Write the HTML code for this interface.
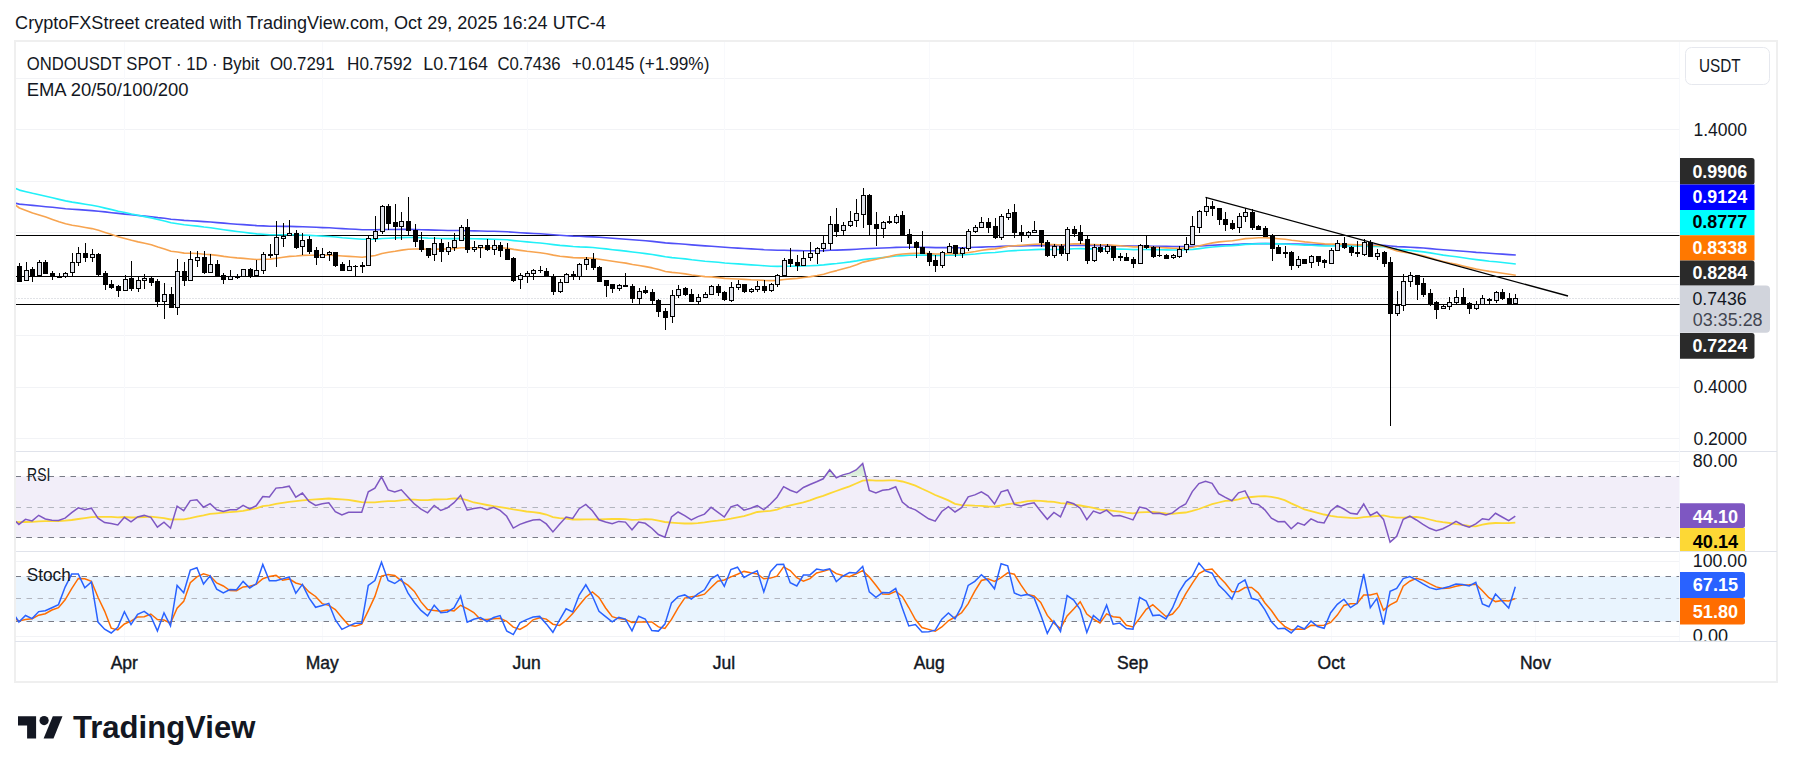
<!DOCTYPE html>
<html><head><meta charset="utf-8"><style>
html,body{margin:0;padding:0;background:#fff;width:1793px;height:773px;overflow:hidden;position:relative;font-family:"Liberation Sans",sans-serif}
text{font-family:"Liberation Sans",sans-serif}
</style></head><body>
<svg style="position:absolute;left:0;top:0" width="1793" height="773" viewBox="0 0 1793 773">
<defs><clipPath id="cp"><rect x="16" y="42" width="1663.5" height="599.5"/></clipPath>
<clipPath id="cp2"><rect x="1680" y="42" width="97" height="598.5"/></clipPath></defs>
<rect x="15" y="41" width="1762" height="641" fill="none" stroke="#efefef" stroke-width="2"/>
<g clip-path="url(#cp)">
<line x1="15.5" x2="1679.5" y1="78.5" y2="78.5" stroke="#f2f3f6" stroke-width="1"/>
<line x1="15.5" x2="1679.5" y1="129.5" y2="129.5" stroke="#f2f3f6" stroke-width="1"/>
<line x1="15.5" x2="1679.5" y1="181.5" y2="181.5" stroke="#f2f3f6" stroke-width="1"/>
<line x1="15.5" x2="1679.5" y1="232.5" y2="232.5" stroke="#f2f3f6" stroke-width="1"/>
<line x1="15.5" x2="1679.5" y1="284.5" y2="284.5" stroke="#f2f3f6" stroke-width="1"/>
<line x1="15.5" x2="1679.5" y1="335.5" y2="335.5" stroke="#f2f3f6" stroke-width="1"/>
<line x1="15.5" x2="1679.5" y1="387.5" y2="387.5" stroke="#f2f3f6" stroke-width="1"/>
<line x1="15.5" x2="1679.5" y1="438.5" y2="438.5" stroke="#f2f3f6" stroke-width="1"/>
<line x1="124.5" x2="124.5" y1="41" y2="641" stroke="#f8f9fc" stroke-width="1"/>
<line x1="322.5" x2="322.5" y1="41" y2="641" stroke="#f8f9fc" stroke-width="1"/>
<line x1="527.5" x2="527.5" y1="41" y2="641" stroke="#f8f9fc" stroke-width="1"/>
<line x1="724.5" x2="724.5" y1="41" y2="641" stroke="#f8f9fc" stroke-width="1"/>
<line x1="929.5" x2="929.5" y1="41" y2="641" stroke="#f8f9fc" stroke-width="1"/>
<line x1="1133.5" x2="1133.5" y1="41" y2="641" stroke="#f8f9fc" stroke-width="1"/>
<line x1="1331.5" x2="1331.5" y1="41" y2="641" stroke="#f8f9fc" stroke-width="1"/>
<line x1="1535.5" x2="1535.5" y1="41" y2="641" stroke="#f8f9fc" stroke-width="1"/>
<line x1="15.5" x2="1679.5" y1="461.5" y2="461.5" stroke="#f2f3f6" stroke-width="1"/>
<line x1="15.5" x2="1679.5" y1="492" y2="492" stroke="#f2f3f6" stroke-width="1"/>
<line x1="15.5" x2="1679.5" y1="522.5" y2="522.5" stroke="#f2f3f6" stroke-width="1"/>
<line x1="15.5" x2="1679.5" y1="561.5" y2="561.5" stroke="#f2f3f6" stroke-width="1"/>
<line x1="15.5" x2="1679.5" y1="598.5" y2="598.5" stroke="#f2f3f6" stroke-width="1"/>
<line x1="15.5" x2="1679.5" y1="636.5" y2="636.5" stroke="#f2f3f6" stroke-width="1"/>
<rect x="15.5" y="476.5" width="1664.0" height="61" fill="#f2eef9"/>
<defs><clipPath id="obc"><rect x="0" y="440" width="1793" height="36.5"/></clipPath><linearGradient id="obg" x1="0" y1="0" x2="0" y2="1"><stop offset="0" stop-color="#d0ead1"/><stop offset="1" stop-color="#f3f9f3"/></linearGradient></defs>
<polygon clip-path="url(#obc)" points="796.8,492.6 803.4,487.5 810.0,484.5 816.6,481.8 823.2,478.8 829.7,469.7 836.3,477.8 842.9,474.9 849.5,473.1 856.1,470.0 862.7,463.5 869.3,490.5 875.9,492.9 882.5,490.3 882.5,476.5 796.8,476.5" fill="url(#obg)"/>
<rect x="15.5" y="576.5" width="1664.0" height="45" fill="#e9f4fe"/>
<line x1="15.5" x2="1679.5" y1="476.5" y2="476.5" stroke="#787b86" stroke-width="1" stroke-dasharray="5.5,5.5"/>
<line x1="15.5" x2="1679.5" y1="507.5" y2="507.5" stroke="#b2b5be" stroke-width="1" stroke-dasharray="5.5,5.5"/>
<line x1="15.5" x2="1679.5" y1="537.5" y2="537.5" stroke="#787b86" stroke-width="1" stroke-dasharray="5.5,5.5"/>
<line x1="15.5" x2="1679.5" y1="576.5" y2="576.5" stroke="#787b86" stroke-width="1" stroke-dasharray="5.5,5.5"/>
<line x1="15.5" x2="1679.5" y1="598.5" y2="598.5" stroke="#b2b5be" stroke-width="1" stroke-dasharray="5.5,5.5"/>
<line x1="15.5" x2="1679.5" y1="621.5" y2="621.5" stroke="#787b86" stroke-width="1" stroke-dasharray="5.5,5.5"/>
<line x1="15" x2="1777" y1="451.5" y2="451.5" stroke="#e0e3eb" stroke-width="1"/>
<line x1="15" x2="1777" y1="551.5" y2="551.5" stroke="#e0e3eb" stroke-width="1"/>
<line x1="15" x2="1777" y1="641.5" y2="641.5" stroke="#e0e3eb" stroke-width="1"/>
<line x1="1679.5" x2="1679.5" y1="41" y2="681" stroke="#f0f3fa" stroke-width="1"/>
<line x1="15.5" x2="1679.5" y1="298.5" y2="298.5" stroke="#c3c6ce" stroke-width="1" stroke-dasharray="1,2"/>
<line x1="15.5" x2="1679.5" y1="235.5" y2="235.5" stroke="#000" stroke-width="1" shape-rendering="crispEdges"/>
<line x1="15.5" x2="1679.5" y1="276.5" y2="276.5" stroke="#000" stroke-width="1" shape-rendering="crispEdges"/>
<line x1="15.5" x2="1679.5" y1="304.5" y2="304.5" stroke="#000" stroke-width="1" shape-rendering="crispEdges"/>
<polyline points="15.5,203.3 19.4,204.1 26.0,204.7 32.6,205.4 39.2,206.0 45.8,206.7 52.4,207.3 59.0,208.0 65.6,208.7 72.2,209.2 78.8,209.6 85.3,210.1 91.9,210.6 98.5,211.2 105.1,211.9 111.7,212.7 118.3,213.4 124.9,214.1 131.5,214.8 138.1,215.5 144.7,216.1 151.3,216.7 157.9,217.6 164.5,218.3 171.0,219.2 177.6,219.8 184.2,220.4 190.8,220.7 197.4,221.1 204.0,221.6 210.6,222.0 217.2,222.6 223.8,223.1 230.4,223.7 237.0,224.2 243.6,224.6 250.2,225.1 256.7,225.6 263.3,225.9 269.9,226.2 276.5,226.3 283.1,226.4 289.7,226.4 296.3,226.6 302.9,226.8 309.5,227.0 316.1,227.3 322.7,227.6 329.3,227.8 335.8,228.2 342.4,228.6 349.0,229.0 355.6,229.3 362.2,229.7 368.8,229.8 375.4,229.8 382.0,229.6 388.6,229.5 395.2,229.5 401.8,229.4 408.4,229.4 414.9,229.5 421.5,229.7 428.1,229.9 434.7,230.1 441.3,230.3 447.9,230.5 454.5,230.5 461.1,230.5 467.7,230.7 474.3,230.9 480.9,231.0 487.5,231.2 494.1,231.3 500.6,231.5 507.2,231.8 513.8,232.3 520.4,232.7 527.0,233.1 533.6,233.5 540.2,233.8 546.8,234.2 553.4,234.8 560.0,235.3 566.6,235.7 573.2,236.1 579.7,236.3 586.3,236.6 592.9,236.9 599.5,237.3 606.1,237.8 612.7,238.3 619.3,238.7 625.9,239.2 632.5,239.8 639.1,240.3 645.7,240.8 652.3,241.4 658.9,242.1 665.4,242.9 672.0,243.4 678.6,243.8 685.2,244.3 691.8,244.9 698.4,245.4 705.0,245.9 711.6,246.3 718.2,246.8 724.8,247.3 731.4,247.7 738.0,248.1 744.5,248.5 751.1,248.9 757.7,249.2 764.3,249.7 770.9,250.0 777.5,250.2 784.1,250.3 790.7,250.5 797.3,250.6 803.9,250.7 810.5,250.7 817.1,250.7 823.7,250.6 830.2,250.3 836.8,250.1 843.4,249.9 850.0,249.6 856.6,249.2 863.2,248.7 869.8,248.5 876.4,248.2 883.0,248.0 889.6,247.7 896.2,247.4 902.8,247.3 909.3,247.2 915.9,247.2 922.5,247.3 929.1,247.4 935.7,247.6 942.3,247.6 948.9,247.6 955.5,247.7 962.1,247.7 968.7,247.5 975.3,247.3 981.9,247.1 988.5,246.8 995.0,246.7 1001.6,246.4 1008.2,246.1 1014.8,246.0 1021.4,245.9 1028.0,245.7 1034.6,245.6 1041.2,245.5 1047.8,245.6 1054.4,245.6 1061.0,245.7 1067.6,245.5 1074.2,245.4 1080.7,245.4 1087.3,245.5 1093.9,245.5 1100.5,245.6 1107.1,245.6 1113.7,245.7 1120.3,245.8 1126.9,245.9 1133.5,246.1 1140.1,246.1 1146.7,246.1 1153.3,246.2 1159.8,246.3 1166.4,246.4 1173.0,246.5 1179.6,246.5 1186.2,246.5 1192.8,246.3 1199.4,246.0 1206.0,245.6 1212.6,245.2 1219.2,244.9 1225.8,244.7 1232.4,244.6 1239.0,244.3 1245.5,243.9 1252.1,243.8 1258.7,243.6 1265.3,243.6 1271.9,243.6 1278.5,243.7 1285.1,243.8 1291.7,244.0 1298.3,244.1 1304.9,244.3 1311.5,244.5 1318.1,244.6 1324.6,244.8 1331.2,244.8 1337.8,244.8 1344.4,244.8 1351.0,244.9 1357.6,245.0 1364.2,245.0 1370.8,245.1 1377.4,245.2 1384.0,245.3 1390.6,246.0 1397.2,246.6 1403.8,246.9 1410.3,247.2 1416.9,247.6 1423.5,248.0 1430.1,248.6 1436.7,249.2 1443.3,249.8 1449.9,250.3 1456.5,250.7 1463.1,251.3 1469.7,251.8 1476.3,252.4 1482.9,252.8 1489.4,253.3 1496.0,253.7 1502.6,254.1 1509.2,254.6 1515.8,255.0" fill="none" stroke="#5050f8" stroke-width="1.6" stroke-linejoin="round"/>
<polyline points="15.5,188.3 19.4,190.1 26.0,191.7 32.6,193.3 39.2,194.7 45.8,196.3 52.4,197.8 59.0,199.4 65.6,200.9 72.2,202.1 78.8,203.1 85.3,204.2 91.9,205.2 98.5,206.5 105.1,208.1 111.7,209.6 118.3,211.2 124.9,212.5 131.5,214.0 138.1,215.3 144.7,216.6 151.3,217.9 157.9,219.5 164.5,221.0 171.0,222.7 177.6,223.7 184.2,224.8 190.8,225.5 197.4,226.1 204.0,227.0 210.6,227.7 217.2,228.7 223.8,229.7 230.4,230.6 237.0,231.5 243.6,232.3 250.2,233.1 256.7,233.9 263.3,234.3 269.9,234.7 276.5,234.7 283.1,234.7 289.7,234.7 296.3,235.0 302.9,235.0 309.5,235.4 316.1,235.8 322.7,236.1 329.3,236.5 335.8,237.0 342.4,237.7 349.0,238.2 355.6,238.8 362.2,239.3 368.8,239.3 375.4,239.2 382.0,238.5 388.6,238.2 395.2,237.9 401.8,237.6 408.4,237.5 414.9,237.5 421.5,237.8 428.1,238.1 434.7,238.2 441.3,238.5 447.9,238.6 454.5,238.6 461.1,238.4 467.7,238.6 474.3,238.8 480.9,238.9 487.5,239.1 494.1,239.2 500.6,239.5 507.2,239.8 513.8,240.6 520.4,241.3 527.0,241.9 533.6,242.5 540.2,243.0 546.8,243.7 553.4,244.6 560.0,245.4 566.6,245.9 573.2,246.5 579.7,246.9 586.3,247.1 592.9,247.5 599.5,248.2 606.1,248.9 612.7,249.7 619.3,250.4 625.9,251.1 632.5,252.0 639.1,252.8 645.7,253.6 652.3,254.5 658.9,255.6 665.4,256.8 672.0,257.6 678.6,258.2 685.2,258.9 691.8,259.8 698.4,260.5 705.0,261.2 711.6,261.7 718.2,262.3 724.8,263.0 731.4,263.5 738.0,263.9 744.5,264.4 751.1,264.9 757.7,265.3 764.3,265.8 770.9,266.2 777.5,266.4 784.1,266.2 790.7,266.2 797.3,266.1 803.9,266.0 810.5,265.7 817.1,265.4 823.7,264.9 830.2,264.1 836.8,263.5 843.4,262.7 850.0,261.9 856.6,260.9 863.2,259.6 869.8,258.9 876.4,258.3 883.0,257.6 889.6,256.8 896.2,256.0 902.8,255.6 909.3,255.3 915.9,255.2 922.5,255.1 929.1,255.2 935.7,255.4 942.3,255.4 948.9,255.2 955.5,255.1 962.1,255.0 968.7,254.5 975.3,254.0 981.9,253.3 988.5,252.8 995.0,252.5 1001.6,251.8 1008.2,251.0 1014.8,250.6 1021.4,250.3 1028.0,250.0 1034.6,249.6 1041.2,249.4 1047.8,249.5 1054.4,249.5 1061.0,249.5 1067.6,249.1 1074.2,248.8 1080.7,248.6 1087.3,248.9 1093.9,248.8 1100.5,248.9 1107.1,248.8 1113.7,249.0 1120.3,249.1 1126.9,249.3 1133.5,249.6 1140.1,249.5 1146.7,249.5 1153.3,249.6 1159.8,249.7 1166.4,249.9 1173.0,250.0 1179.6,250.0 1186.2,249.8 1192.8,249.4 1199.4,248.6 1206.0,247.8 1212.6,247.0 1219.2,246.5 1225.8,246.0 1232.4,245.6 1239.0,245.1 1245.5,244.4 1252.1,244.1 1258.7,243.8 1265.3,243.6 1271.9,243.7 1278.5,243.9 1285.1,244.0 1291.7,244.5 1298.3,244.8 1304.9,245.1 1311.5,245.3 1318.1,245.6 1324.6,246.0 1331.2,246.0 1337.8,246.0 1344.4,246.0 1351.0,246.1 1357.6,246.3 1364.2,246.2 1370.8,246.4 1377.4,246.5 1384.0,246.8 1390.6,248.2 1397.2,249.3 1403.8,249.9 1410.3,250.4 1416.9,251.1 1423.5,251.9 1430.1,252.9 1436.7,254.0 1443.3,255.1 1449.9,256.0 1456.5,256.8 1463.1,257.7 1469.7,258.7 1476.3,259.6 1482.9,260.4 1489.4,261.2 1496.0,261.8 1502.6,262.5 1509.2,263.3 1515.8,264.0" fill="none" stroke="#22f0f8" stroke-width="1.6" stroke-linejoin="round"/>
<polyline points="15.5,205.0 19.4,208.0 26.0,210.4 32.6,212.9 39.2,214.9 45.8,217.1 52.4,219.4 59.0,221.7 65.6,223.7 72.2,225.2 78.8,226.3 85.3,227.5 91.9,228.6 98.5,230.3 105.1,232.5 111.7,234.6 118.3,236.7 124.9,238.4 131.5,240.3 138.1,241.9 144.7,243.3 151.3,244.8 157.9,247.0 164.5,248.9 171.0,251.2 177.6,252.0 184.2,253.1 190.8,253.3 197.4,253.5 204.0,254.2 210.6,254.6 217.2,255.4 223.8,256.4 230.4,257.2 237.0,257.9 243.6,258.4 250.2,259.0 256.7,259.5 263.3,259.2 269.9,259.1 276.5,258.2 283.1,257.3 289.7,256.4 296.3,256.0 302.9,255.4 309.5,255.2 316.1,255.2 322.7,255.2 329.3,255.1 335.8,255.5 342.4,256.0 349.0,256.4 355.6,256.8 362.2,257.2 368.8,256.4 375.4,255.5 382.0,253.5 388.6,252.3 395.2,251.3 401.8,250.1 408.4,249.3 414.9,249.0 421.5,249.0 428.1,249.2 434.7,249.0 441.3,249.1 447.9,249.0 454.5,248.6 461.1,247.8 467.7,247.8 474.3,247.8 480.9,247.7 487.5,247.8 494.1,247.7 500.6,247.7 507.2,248.2 513.8,249.4 520.4,250.4 527.0,251.3 533.6,252.0 540.2,252.7 546.8,253.7 553.4,255.1 560.0,256.2 566.6,256.9 573.2,257.6 579.7,257.9 586.3,257.9 592.9,258.3 599.5,259.2 606.1,260.2 612.7,261.2 619.3,262.2 625.9,263.1 632.5,264.5 639.1,265.5 645.7,266.6 652.3,267.9 658.9,269.6 665.4,271.5 672.0,272.4 678.6,273.0 685.2,273.9 691.8,275.0 698.4,275.8 705.0,276.6 711.6,276.9 718.2,277.6 724.8,278.4 731.4,278.7 738.0,279.0 744.5,279.4 751.1,279.8 757.7,280.0 764.3,280.4 770.9,280.6 777.5,280.4 784.1,279.5 790.7,278.9 797.3,278.4 803.9,277.5 810.5,276.6 817.1,275.5 823.7,274.2 830.2,272.2 836.8,270.6 843.4,268.8 850.0,266.9 856.6,264.8 863.2,262.1 869.8,260.6 876.4,259.3 883.0,257.8 889.6,256.4 896.2,254.8 902.8,254.0 909.3,253.6 915.9,253.3 922.5,253.3 929.1,253.6 935.7,254.0 942.3,254.0 948.9,253.6 955.5,253.6 962.1,253.4 968.7,252.5 975.3,251.5 981.9,250.3 988.5,249.4 995.0,248.9 1001.6,247.6 1008.2,246.3 1014.8,245.7 1021.4,245.3 1028.0,244.8 1034.6,244.2 1041.2,244.1 1047.8,244.6 1054.4,244.6 1061.0,245.0 1067.6,244.3 1074.2,243.9 1080.7,243.7 1087.3,244.4 1093.9,244.5 1100.5,244.8 1107.1,244.8 1113.7,245.3 1120.3,245.7 1126.9,246.2 1133.5,246.9 1140.1,246.8 1146.7,246.9 1153.3,247.2 1159.8,247.5 1166.4,247.9 1173.0,248.2 1179.6,248.2 1186.2,248.1 1192.8,247.2 1199.4,245.8 1206.0,244.3 1212.6,242.9 1219.2,241.9 1225.8,241.2 1232.4,240.7 1239.0,239.7 1245.5,238.6 1252.1,238.2 1258.7,237.8 1265.3,237.7 1271.9,238.1 1278.5,238.7 1285.1,239.3 1291.7,240.3 1298.3,241.0 1304.9,241.9 1311.5,242.5 1318.1,243.2 1324.6,243.9 1331.2,244.1 1337.8,244.1 1344.4,244.2 1351.0,244.5 1357.6,244.9 1364.2,244.8 1370.8,245.3 1377.4,245.5 1384.0,246.2 1390.6,248.8 1397.2,251.0 1403.8,252.2 1410.3,253.1 1416.9,254.3 1423.5,255.8 1430.1,257.7 1436.7,259.7 1443.3,261.5 1449.9,263.1 1456.5,264.4 1463.1,266.0 1469.7,267.6 1476.3,269.1 1482.9,270.2 1489.4,271.4 1496.0,272.2 1502.6,273.2 1509.2,274.3 1515.8,275.3" fill="none" stroke="#f7a450" stroke-width="1.6" stroke-linejoin="round"/>
<line x1="1205.5" y1="197.3" x2="1568" y2="296" stroke="#000" stroke-width="1.3"/>
<g shape-rendering="crispEdges"><rect x="19" y="263" width="1" height="19" fill="#000"/><rect x="17" y="266" width="5" height="16" fill="#000"/><rect x="26" y="262" width="1" height="19" fill="#000"/><rect x="24" y="270" width="5" height="11" fill="#000"/><rect x="25" y="271" width="3" height="9" fill="#e0e3eb"/><rect x="32" y="267" width="1" height="15" fill="#000"/><rect x="30" y="269" width="5" height="7" fill="#000"/><rect x="39" y="260" width="1" height="17" fill="#000"/><rect x="37" y="262" width="5" height="14" fill="#000"/><rect x="38" y="263" width="3" height="12" fill="#e0e3eb"/><rect x="45" y="260" width="1" height="14" fill="#000"/><rect x="43" y="262" width="5" height="12" fill="#000"/><rect x="52" y="271" width="1" height="9" fill="#000"/><rect x="50" y="273" width="5" height="4" fill="#000"/><rect x="59" y="273" width="1" height="5" fill="#000"/><rect x="57" y="276" width="5" height="2" fill="#000"/><rect x="65" y="272" width="1" height="6" fill="#000"/><rect x="63" y="273" width="5" height="4" fill="#000"/><rect x="64" y="274" width="3" height="2" fill="#e0e3eb"/><rect x="72" y="253" width="1" height="24" fill="#000"/><rect x="70" y="262" width="5" height="11" fill="#000"/><rect x="71" y="263" width="3" height="9" fill="#e0e3eb"/><rect x="78" y="247" width="1" height="19" fill="#000"/><rect x="76" y="253" width="5" height="10" fill="#000"/><rect x="77" y="254" width="3" height="8" fill="#e0e3eb"/><rect x="85" y="243" width="1" height="19" fill="#000"/><rect x="83" y="253" width="5" height="5" fill="#000"/><rect x="92" y="249" width="1" height="13" fill="#000"/><rect x="90" y="254" width="5" height="4" fill="#000"/><rect x="91" y="255" width="3" height="2" fill="#e0e3eb"/><rect x="98" y="253" width="1" height="24" fill="#000"/><rect x="96" y="254" width="5" height="21" fill="#000"/><rect x="105" y="271" width="1" height="19" fill="#000"/><rect x="103" y="273" width="5" height="12" fill="#000"/><rect x="111" y="280" width="1" height="9" fill="#000"/><rect x="109" y="284" width="5" height="4" fill="#000"/><rect x="118" y="285" width="1" height="12" fill="#000"/><rect x="116" y="286" width="5" height="5" fill="#000"/><rect x="125" y="275" width="1" height="16" fill="#000"/><rect x="123" y="279" width="5" height="12" fill="#000"/><rect x="124" y="280" width="3" height="10" fill="#e0e3eb"/><rect x="131" y="261" width="1" height="30" fill="#000"/><rect x="129" y="278" width="5" height="11" fill="#000"/><rect x="138" y="277" width="1" height="15" fill="#000"/><rect x="136" y="280" width="5" height="9" fill="#000"/><rect x="137" y="281" width="3" height="7" fill="#e0e3eb"/><rect x="144" y="274" width="1" height="15" fill="#000"/><rect x="142" y="278" width="5" height="3" fill="#000"/><rect x="143" y="279" width="3" height="1" fill="#e0e3eb"/><rect x="151" y="277" width="1" height="9" fill="#000"/><rect x="149" y="278" width="5" height="5" fill="#000"/><rect x="157" y="279" width="1" height="28" fill="#000"/><rect x="155" y="281" width="5" height="21" fill="#000"/><rect x="164" y="283" width="1" height="36" fill="#000"/><rect x="162" y="294" width="5" height="8" fill="#000"/><rect x="163" y="295" width="3" height="6" fill="#e0e3eb"/><rect x="171" y="287" width="1" height="21" fill="#000"/><rect x="169" y="294" width="5" height="14" fill="#000"/><rect x="177" y="259" width="1" height="56" fill="#000"/><rect x="175" y="271" width="5" height="37" fill="#000"/><rect x="176" y="272" width="3" height="35" fill="#e0e3eb"/><rect x="184" y="262" width="1" height="24" fill="#000"/><rect x="182" y="271" width="5" height="10" fill="#000"/><rect x="190" y="251" width="1" height="30" fill="#000"/><rect x="188" y="259" width="5" height="22" fill="#000"/><rect x="189" y="260" width="3" height="20" fill="#e0e3eb"/><rect x="197" y="251" width="1" height="16" fill="#000"/><rect x="195" y="257" width="5" height="4" fill="#000"/><rect x="196" y="258" width="3" height="2" fill="#e0e3eb"/><rect x="204" y="251" width="1" height="23" fill="#000"/><rect x="202" y="257" width="5" height="16" fill="#000"/><rect x="210" y="254" width="1" height="19" fill="#000"/><rect x="208" y="264" width="5" height="9" fill="#000"/><rect x="209" y="265" width="3" height="7" fill="#e0e3eb"/><rect x="217" y="260" width="1" height="17" fill="#000"/><rect x="215" y="264" width="5" height="13" fill="#000"/><rect x="223" y="273" width="1" height="11" fill="#000"/><rect x="221" y="275" width="5" height="5" fill="#000"/><rect x="230" y="270" width="1" height="10" fill="#000"/><rect x="228" y="276" width="5" height="4" fill="#000"/><rect x="229" y="277" width="3" height="2" fill="#e0e3eb"/><rect x="237" y="274" width="1" height="5" fill="#000"/><rect x="235" y="276" width="5" height="2" fill="#000"/><rect x="243" y="269" width="1" height="8" fill="#000"/><rect x="241" y="269" width="5" height="8" fill="#000"/><rect x="242" y="270" width="3" height="6" fill="#e0e3eb"/><rect x="250" y="268" width="1" height="10" fill="#000"/><rect x="248" y="269" width="5" height="7" fill="#000"/><rect x="256" y="260" width="1" height="16" fill="#000"/><rect x="254" y="270" width="5" height="6" fill="#000"/><rect x="255" y="271" width="3" height="4" fill="#e0e3eb"/><rect x="263" y="252" width="1" height="22" fill="#000"/><rect x="261" y="254" width="5" height="17" fill="#000"/><rect x="262" y="255" width="3" height="15" fill="#e0e3eb"/><rect x="270" y="244" width="1" height="14" fill="#000"/><rect x="268" y="254" width="5" height="2" fill="#000"/><rect x="276" y="221" width="1" height="46" fill="#000"/><rect x="274" y="237" width="5" height="18" fill="#000"/><rect x="275" y="238" width="3" height="16" fill="#e0e3eb"/><rect x="283" y="223" width="1" height="24" fill="#000"/><rect x="281" y="236" width="5" height="3" fill="#000"/><rect x="282" y="237" width="3" height="1" fill="#e0e3eb"/><rect x="289" y="220" width="1" height="16" fill="#000"/><rect x="287" y="233" width="5" height="3" fill="#000"/><rect x="288" y="234" width="3" height="1" fill="#e0e3eb"/><rect x="296" y="230" width="1" height="19" fill="#000"/><rect x="294" y="233" width="5" height="15" fill="#000"/><rect x="302" y="233" width="1" height="22" fill="#000"/><rect x="300" y="240" width="5" height="7" fill="#000"/><rect x="301" y="241" width="3" height="5" fill="#e0e3eb"/><rect x="309" y="236" width="1" height="18" fill="#000"/><rect x="307" y="239" width="5" height="13" fill="#000"/><rect x="316" y="247" width="1" height="18" fill="#000"/><rect x="314" y="250" width="5" height="8" fill="#000"/><rect x="322" y="248" width="1" height="10" fill="#000"/><rect x="320" y="254" width="5" height="4" fill="#000"/><rect x="321" y="255" width="3" height="2" fill="#e0e3eb"/><rect x="329" y="251" width="1" height="10" fill="#000"/><rect x="327" y="252" width="5" height="3" fill="#000"/><rect x="328" y="253" width="3" height="1" fill="#e0e3eb"/><rect x="335" y="252" width="1" height="15" fill="#000"/><rect x="333" y="252" width="5" height="14" fill="#000"/><rect x="342" y="262" width="1" height="9" fill="#000"/><rect x="340" y="264" width="5" height="7" fill="#000"/><rect x="349" y="260" width="1" height="11" fill="#000"/><rect x="347" y="266" width="5" height="5" fill="#000"/><rect x="348" y="267" width="3" height="3" fill="#e0e3eb"/><rect x="355" y="265" width="1" height="12" fill="#000"/><rect x="353" y="266" width="5" height="1" fill="#000"/><rect x="362" y="262" width="1" height="11" fill="#000"/><rect x="360" y="265" width="5" height="2" fill="#000"/><rect x="368" y="236" width="1" height="30" fill="#000"/><rect x="366" y="238" width="5" height="28" fill="#000"/><rect x="367" y="239" width="3" height="26" fill="#e0e3eb"/><rect x="375" y="216" width="1" height="26" fill="#000"/><rect x="373" y="231" width="5" height="8" fill="#000"/><rect x="374" y="232" width="3" height="6" fill="#e0e3eb"/><rect x="382" y="205" width="1" height="29" fill="#000"/><rect x="380" y="206" width="5" height="26" fill="#000"/><rect x="381" y="207" width="3" height="24" fill="#e0e3eb"/><rect x="388" y="204" width="1" height="26" fill="#000"/><rect x="386" y="206" width="5" height="18" fill="#000"/><rect x="395" y="204" width="1" height="36" fill="#000"/><rect x="393" y="222" width="5" height="5" fill="#000"/><rect x="401" y="212" width="1" height="28" fill="#000"/><rect x="399" y="221" width="5" height="6" fill="#000"/><rect x="400" y="222" width="3" height="4" fill="#e0e3eb"/><rect x="408" y="197" width="1" height="39" fill="#000"/><rect x="406" y="221" width="5" height="10" fill="#000"/><rect x="415" y="224" width="1" height="23" fill="#000"/><rect x="413" y="230" width="5" height="12" fill="#000"/><rect x="421" y="232" width="1" height="20" fill="#000"/><rect x="419" y="240" width="5" height="10" fill="#000"/><rect x="428" y="248" width="1" height="10" fill="#000"/><rect x="426" y="248" width="5" height="8" fill="#000"/><rect x="434" y="237" width="1" height="24" fill="#000"/><rect x="432" y="243" width="5" height="12" fill="#000"/><rect x="433" y="244" width="3" height="10" fill="#e0e3eb"/><rect x="441" y="239" width="1" height="23" fill="#000"/><rect x="439" y="243" width="5" height="9" fill="#000"/><rect x="448" y="242" width="1" height="13" fill="#000"/><rect x="446" y="247" width="5" height="5" fill="#000"/><rect x="447" y="248" width="3" height="3" fill="#e0e3eb"/><rect x="454" y="233" width="1" height="18" fill="#000"/><rect x="452" y="240" width="5" height="8" fill="#000"/><rect x="453" y="241" width="3" height="6" fill="#e0e3eb"/><rect x="461" y="225" width="1" height="16" fill="#000"/><rect x="459" y="227" width="5" height="14" fill="#000"/><rect x="460" y="228" width="3" height="12" fill="#e0e3eb"/><rect x="467" y="219" width="1" height="34" fill="#000"/><rect x="465" y="227" width="5" height="23" fill="#000"/><rect x="474" y="241" width="1" height="11" fill="#000"/><rect x="472" y="247" width="5" height="3" fill="#000"/><rect x="473" y="248" width="3" height="1" fill="#e0e3eb"/><rect x="480" y="245" width="1" height="13" fill="#000"/><rect x="478" y="245" width="5" height="3" fill="#000"/><rect x="479" y="246" width="3" height="1" fill="#e0e3eb"/><rect x="487" y="239" width="1" height="12" fill="#000"/><rect x="485" y="245" width="5" height="5" fill="#000"/><rect x="494" y="240" width="1" height="15" fill="#000"/><rect x="492" y="245" width="5" height="5" fill="#000"/><rect x="493" y="246" width="3" height="3" fill="#e0e3eb"/><rect x="500" y="242" width="1" height="15" fill="#000"/><rect x="498" y="245" width="5" height="6" fill="#000"/><rect x="507" y="243" width="1" height="17" fill="#000"/><rect x="505" y="249" width="5" height="11" fill="#000"/><rect x="513" y="257" width="1" height="25" fill="#000"/><rect x="511" y="258" width="5" height="23" fill="#000"/><rect x="520" y="273" width="1" height="16" fill="#000"/><rect x="518" y="275" width="5" height="5" fill="#000"/><rect x="519" y="276" width="3" height="3" fill="#e0e3eb"/><rect x="527" y="271" width="1" height="12" fill="#000"/><rect x="525" y="273" width="5" height="4" fill="#000"/><rect x="526" y="274" width="3" height="2" fill="#e0e3eb"/><rect x="533" y="269" width="1" height="11" fill="#000"/><rect x="531" y="270" width="5" height="4" fill="#000"/><rect x="532" y="271" width="3" height="2" fill="#e0e3eb"/><rect x="540" y="266" width="1" height="7" fill="#000"/><rect x="538" y="270" width="5" height="1" fill="#000"/><rect x="546" y="268" width="1" height="9" fill="#000"/><rect x="544" y="271" width="5" height="6" fill="#000"/><rect x="553" y="274" width="1" height="21" fill="#000"/><rect x="551" y="276" width="5" height="16" fill="#000"/><rect x="560" y="279" width="1" height="14" fill="#000"/><rect x="558" y="282" width="5" height="10" fill="#000"/><rect x="559" y="283" width="3" height="8" fill="#e0e3eb"/><rect x="566" y="273" width="1" height="10" fill="#000"/><rect x="564" y="274" width="5" height="9" fill="#000"/><rect x="565" y="275" width="3" height="7" fill="#e0e3eb"/><rect x="573" y="271" width="1" height="9" fill="#000"/><rect x="571" y="274" width="5" height="3" fill="#000"/><rect x="579" y="263" width="1" height="17" fill="#000"/><rect x="577" y="264" width="5" height="13" fill="#000"/><rect x="578" y="265" width="3" height="11" fill="#e0e3eb"/><rect x="586" y="257" width="1" height="13" fill="#000"/><rect x="584" y="259" width="5" height="6" fill="#000"/><rect x="585" y="260" width="3" height="4" fill="#e0e3eb"/><rect x="593" y="253" width="1" height="17" fill="#000"/><rect x="591" y="259" width="5" height="9" fill="#000"/><rect x="599" y="266" width="1" height="16" fill="#000"/><rect x="597" y="267" width="5" height="15" fill="#000"/><rect x="606" y="280" width="1" height="17" fill="#000"/><rect x="604" y="280" width="5" height="6" fill="#000"/><rect x="612" y="284" width="1" height="9" fill="#000"/><rect x="610" y="284" width="5" height="5" fill="#000"/><rect x="619" y="284" width="1" height="7" fill="#000"/><rect x="617" y="285" width="5" height="4" fill="#000"/><rect x="618" y="286" width="3" height="2" fill="#e0e3eb"/><rect x="625" y="273" width="1" height="14" fill="#000"/><rect x="623" y="285" width="5" height="2" fill="#000"/><rect x="632" y="284" width="1" height="19" fill="#000"/><rect x="630" y="286" width="5" height="13" fill="#000"/><rect x="639" y="288" width="1" height="17" fill="#000"/><rect x="637" y="291" width="5" height="8" fill="#000"/><rect x="638" y="292" width="3" height="6" fill="#e0e3eb"/><rect x="645" y="286" width="1" height="8" fill="#000"/><rect x="643" y="290" width="5" height="3" fill="#000"/><rect x="652" y="289" width="1" height="16" fill="#000"/><rect x="650" y="292" width="5" height="9" fill="#000"/><rect x="658" y="299" width="1" height="18" fill="#000"/><rect x="656" y="300" width="5" height="12" fill="#000"/><rect x="665" y="308" width="1" height="22" fill="#000"/><rect x="663" y="311" width="5" height="7" fill="#000"/><rect x="672" y="290" width="1" height="33" fill="#000"/><rect x="670" y="295" width="5" height="22" fill="#000"/><rect x="671" y="296" width="3" height="20" fill="#e0e3eb"/><rect x="678" y="285" width="1" height="13" fill="#000"/><rect x="676" y="289" width="5" height="7" fill="#000"/><rect x="677" y="290" width="3" height="5" fill="#e0e3eb"/><rect x="685" y="287" width="1" height="9" fill="#000"/><rect x="683" y="288" width="5" height="7" fill="#000"/><rect x="691" y="289" width="1" height="13" fill="#000"/><rect x="689" y="294" width="5" height="8" fill="#000"/><rect x="698" y="294" width="1" height="11" fill="#000"/><rect x="696" y="297" width="5" height="5" fill="#000"/><rect x="697" y="298" width="3" height="3" fill="#e0e3eb"/><rect x="705" y="292" width="1" height="6" fill="#000"/><rect x="703" y="294" width="5" height="4" fill="#000"/><rect x="704" y="295" width="3" height="2" fill="#e0e3eb"/><rect x="711" y="285" width="1" height="10" fill="#000"/><rect x="709" y="286" width="5" height="9" fill="#000"/><rect x="710" y="287" width="3" height="7" fill="#e0e3eb"/><rect x="718" y="284" width="1" height="12" fill="#000"/><rect x="716" y="286" width="5" height="7" fill="#000"/><rect x="724" y="291" width="1" height="10" fill="#000"/><rect x="722" y="292" width="5" height="8" fill="#000"/><rect x="731" y="282" width="1" height="20" fill="#000"/><rect x="729" y="287" width="5" height="14" fill="#000"/><rect x="730" y="288" width="3" height="12" fill="#e0e3eb"/><rect x="738" y="280" width="1" height="10" fill="#000"/><rect x="736" y="284" width="5" height="4" fill="#000"/><rect x="737" y="285" width="3" height="2" fill="#e0e3eb"/><rect x="744" y="284" width="1" height="9" fill="#000"/><rect x="742" y="284" width="5" height="8" fill="#000"/><rect x="751" y="288" width="1" height="5" fill="#000"/><rect x="749" y="289" width="5" height="3" fill="#000"/><rect x="750" y="290" width="3" height="1" fill="#e0e3eb"/><rect x="757" y="281" width="1" height="11" fill="#000"/><rect x="755" y="286" width="5" height="4" fill="#000"/><rect x="756" y="287" width="3" height="2" fill="#e0e3eb"/><rect x="764" y="280" width="1" height="13" fill="#000"/><rect x="762" y="286" width="5" height="5" fill="#000"/><rect x="771" y="283" width="1" height="9" fill="#000"/><rect x="769" y="284" width="5" height="7" fill="#000"/><rect x="770" y="285" width="3" height="5" fill="#e0e3eb"/><rect x="777" y="274" width="1" height="13" fill="#000"/><rect x="775" y="275" width="5" height="10" fill="#000"/><rect x="776" y="276" width="3" height="8" fill="#e0e3eb"/><rect x="784" y="258" width="1" height="19" fill="#000"/><rect x="782" y="260" width="5" height="16" fill="#000"/><rect x="783" y="261" width="3" height="14" fill="#e0e3eb"/><rect x="790" y="248" width="1" height="19" fill="#000"/><rect x="788" y="259" width="5" height="5" fill="#000"/><rect x="797" y="255" width="1" height="16" fill="#000"/><rect x="795" y="262" width="5" height="4" fill="#000"/><rect x="803" y="251" width="1" height="15" fill="#000"/><rect x="801" y="258" width="5" height="8" fill="#000"/><rect x="802" y="259" width="3" height="6" fill="#e0e3eb"/><rect x="810" y="242" width="1" height="19" fill="#000"/><rect x="808" y="253" width="5" height="5" fill="#000"/><rect x="809" y="254" width="3" height="3" fill="#e0e3eb"/><rect x="817" y="247" width="1" height="17" fill="#000"/><rect x="815" y="248" width="5" height="6" fill="#000"/><rect x="816" y="249" width="3" height="4" fill="#e0e3eb"/><rect x="823" y="236" width="1" height="16" fill="#000"/><rect x="821" y="243" width="5" height="6" fill="#000"/><rect x="822" y="244" width="3" height="4" fill="#e0e3eb"/><rect x="830" y="216" width="1" height="34" fill="#000"/><rect x="828" y="224" width="5" height="20" fill="#000"/><rect x="829" y="225" width="3" height="18" fill="#e0e3eb"/><rect x="836" y="208" width="1" height="29" fill="#000"/><rect x="834" y="224" width="5" height="8" fill="#000"/><rect x="843" y="222" width="1" height="14" fill="#000"/><rect x="841" y="225" width="5" height="6" fill="#000"/><rect x="842" y="226" width="3" height="4" fill="#e0e3eb"/><rect x="850" y="211" width="1" height="16" fill="#000"/><rect x="848" y="221" width="5" height="5" fill="#000"/><rect x="849" y="222" width="3" height="3" fill="#e0e3eb"/><rect x="856" y="199" width="1" height="28" fill="#000"/><rect x="854" y="213" width="5" height="8" fill="#000"/><rect x="855" y="214" width="3" height="6" fill="#e0e3eb"/><rect x="863" y="188" width="1" height="40" fill="#000"/><rect x="861" y="195" width="5" height="20" fill="#000"/><rect x="862" y="196" width="3" height="18" fill="#e0e3eb"/><rect x="869" y="194" width="1" height="42" fill="#000"/><rect x="867" y="195" width="5" height="30" fill="#000"/><rect x="876" y="212" width="1" height="34" fill="#000"/><rect x="874" y="224" width="5" height="5" fill="#000"/><rect x="883" y="221" width="1" height="17" fill="#000"/><rect x="881" y="222" width="5" height="7" fill="#000"/><rect x="882" y="223" width="3" height="5" fill="#e0e3eb"/><rect x="889" y="216" width="1" height="8" fill="#000"/><rect x="887" y="221" width="5" height="2" fill="#000"/><rect x="896" y="214" width="1" height="10" fill="#000"/><rect x="894" y="216" width="5" height="7" fill="#000"/><rect x="895" y="217" width="3" height="5" fill="#e0e3eb"/><rect x="902" y="211" width="1" height="25" fill="#000"/><rect x="900" y="215" width="5" height="21" fill="#000"/><rect x="909" y="229" width="1" height="20" fill="#000"/><rect x="907" y="234" width="5" height="10" fill="#000"/><rect x="916" y="241" width="1" height="17" fill="#000"/><rect x="914" y="242" width="5" height="6" fill="#000"/><rect x="922" y="231" width="1" height="23" fill="#000"/><rect x="920" y="247" width="5" height="7" fill="#000"/><rect x="929" y="251" width="1" height="15" fill="#000"/><rect x="927" y="253" width="5" height="9" fill="#000"/><rect x="935" y="255" width="1" height="17" fill="#000"/><rect x="933" y="260" width="5" height="6" fill="#000"/><rect x="942" y="251" width="1" height="17" fill="#000"/><rect x="940" y="252" width="5" height="14" fill="#000"/><rect x="941" y="253" width="3" height="12" fill="#e0e3eb"/><rect x="949" y="243" width="1" height="10" fill="#000"/><rect x="947" y="246" width="5" height="7" fill="#000"/><rect x="948" y="247" width="3" height="5" fill="#e0e3eb"/><rect x="955" y="245" width="1" height="12" fill="#000"/><rect x="953" y="245" width="5" height="9" fill="#000"/><rect x="962" y="247" width="1" height="11" fill="#000"/><rect x="960" y="248" width="5" height="6" fill="#000"/><rect x="961" y="249" width="3" height="4" fill="#e0e3eb"/><rect x="968" y="229" width="1" height="22" fill="#000"/><rect x="966" y="231" width="5" height="18" fill="#000"/><rect x="967" y="232" width="3" height="16" fill="#e0e3eb"/><rect x="975" y="225" width="1" height="8" fill="#000"/><rect x="973" y="227" width="5" height="5" fill="#000"/><rect x="974" y="228" width="3" height="3" fill="#e0e3eb"/><rect x="981" y="217" width="1" height="11" fill="#000"/><rect x="979" y="222" width="5" height="6" fill="#000"/><rect x="980" y="223" width="3" height="4" fill="#e0e3eb"/><rect x="988" y="218" width="1" height="15" fill="#000"/><rect x="986" y="222" width="5" height="6" fill="#000"/><rect x="995" y="218" width="1" height="21" fill="#000"/><rect x="993" y="226" width="5" height="12" fill="#000"/><rect x="1001" y="214" width="1" height="26" fill="#000"/><rect x="999" y="216" width="5" height="22" fill="#000"/><rect x="1000" y="217" width="3" height="20" fill="#e0e3eb"/><rect x="1008" y="209" width="1" height="11" fill="#000"/><rect x="1006" y="213" width="5" height="5" fill="#000"/><rect x="1007" y="214" width="3" height="3" fill="#e0e3eb"/><rect x="1014" y="204" width="1" height="34" fill="#000"/><rect x="1012" y="212" width="5" height="21" fill="#000"/><rect x="1021" y="225" width="1" height="17" fill="#000"/><rect x="1019" y="232" width="5" height="4" fill="#000"/><rect x="1028" y="231" width="1" height="7" fill="#000"/><rect x="1026" y="232" width="5" height="4" fill="#000"/><rect x="1027" y="233" width="3" height="2" fill="#e0e3eb"/><rect x="1034" y="221" width="1" height="12" fill="#000"/><rect x="1032" y="230" width="5" height="3" fill="#000"/><rect x="1033" y="231" width="3" height="1" fill="#e0e3eb"/><rect x="1041" y="230" width="1" height="17" fill="#000"/><rect x="1039" y="230" width="5" height="13" fill="#000"/><rect x="1047" y="240" width="1" height="17" fill="#000"/><rect x="1045" y="242" width="5" height="14" fill="#000"/><rect x="1054" y="244" width="1" height="14" fill="#000"/><rect x="1052" y="246" width="5" height="10" fill="#000"/><rect x="1053" y="247" width="3" height="8" fill="#e0e3eb"/><rect x="1061" y="244" width="1" height="12" fill="#000"/><rect x="1059" y="246" width="5" height="8" fill="#000"/><rect x="1067" y="227" width="1" height="34" fill="#000"/><rect x="1065" y="229" width="5" height="25" fill="#000"/><rect x="1066" y="230" width="3" height="23" fill="#e0e3eb"/><rect x="1074" y="226" width="1" height="11" fill="#000"/><rect x="1072" y="229" width="5" height="5" fill="#000"/><rect x="1080" y="225" width="1" height="19" fill="#000"/><rect x="1078" y="232" width="5" height="9" fill="#000"/><rect x="1087" y="235" width="1" height="29" fill="#000"/><rect x="1085" y="239" width="5" height="22" fill="#000"/><rect x="1094" y="244" width="1" height="18" fill="#000"/><rect x="1092" y="247" width="5" height="14" fill="#000"/><rect x="1093" y="248" width="3" height="12" fill="#e0e3eb"/><rect x="1100" y="244" width="1" height="9" fill="#000"/><rect x="1098" y="247" width="5" height="5" fill="#000"/><rect x="1107" y="244" width="1" height="10" fill="#000"/><rect x="1105" y="246" width="5" height="6" fill="#000"/><rect x="1106" y="247" width="3" height="4" fill="#e0e3eb"/><rect x="1113" y="246" width="1" height="15" fill="#000"/><rect x="1111" y="246" width="5" height="12" fill="#000"/><rect x="1120" y="253" width="1" height="8" fill="#000"/><rect x="1118" y="256" width="5" height="2" fill="#000"/><rect x="1126" y="253" width="1" height="8" fill="#000"/><rect x="1124" y="257" width="5" height="4" fill="#000"/><rect x="1133" y="257" width="1" height="11" fill="#000"/><rect x="1131" y="259" width="5" height="5" fill="#000"/><rect x="1140" y="244" width="1" height="20" fill="#000"/><rect x="1138" y="245" width="5" height="19" fill="#000"/><rect x="1139" y="246" width="3" height="17" fill="#e0e3eb"/><rect x="1146" y="236" width="1" height="13" fill="#000"/><rect x="1144" y="245" width="5" height="3" fill="#000"/><rect x="1153" y="246" width="1" height="12" fill="#000"/><rect x="1151" y="247" width="5" height="10" fill="#000"/><rect x="1159" y="247" width="1" height="10" fill="#000"/><rect x="1157" y="255" width="5" height="1" fill="#000"/><rect x="1166" y="254" width="1" height="5" fill="#000"/><rect x="1164" y="255" width="5" height="4" fill="#000"/><rect x="1173" y="254" width="1" height="5" fill="#000"/><rect x="1171" y="255" width="5" height="3" fill="#000"/><rect x="1172" y="256" width="3" height="1" fill="#e0e3eb"/><rect x="1179" y="246" width="1" height="12" fill="#000"/><rect x="1177" y="249" width="5" height="8" fill="#000"/><rect x="1178" y="250" width="3" height="6" fill="#e0e3eb"/><rect x="1186" y="237" width="1" height="16" fill="#000"/><rect x="1184" y="244" width="5" height="6" fill="#000"/><rect x="1185" y="245" width="3" height="4" fill="#e0e3eb"/><rect x="1192" y="216" width="1" height="29" fill="#000"/><rect x="1190" y="226" width="5" height="19" fill="#000"/><rect x="1191" y="227" width="3" height="17" fill="#e0e3eb"/><rect x="1199" y="210" width="1" height="23" fill="#000"/><rect x="1197" y="211" width="5" height="17" fill="#000"/><rect x="1198" y="212" width="3" height="15" fill="#e0e3eb"/><rect x="1206" y="197" width="1" height="19" fill="#000"/><rect x="1204" y="206" width="5" height="6" fill="#000"/><rect x="1205" y="207" width="3" height="4" fill="#e0e3eb"/><rect x="1212" y="201" width="1" height="15" fill="#000"/><rect x="1210" y="206" width="5" height="3" fill="#000"/><rect x="1219" y="208" width="1" height="17" fill="#000"/><rect x="1217" y="208" width="5" height="12" fill="#000"/><rect x="1225" y="212" width="1" height="19" fill="#000"/><rect x="1223" y="219" width="5" height="6" fill="#000"/><rect x="1232" y="220" width="1" height="10" fill="#000"/><rect x="1230" y="223" width="5" height="6" fill="#000"/><rect x="1239" y="213" width="1" height="20" fill="#000"/><rect x="1237" y="216" width="5" height="12" fill="#000"/><rect x="1238" y="217" width="3" height="10" fill="#e0e3eb"/><rect x="1245" y="208" width="1" height="14" fill="#000"/><rect x="1243" y="212" width="5" height="5" fill="#000"/><rect x="1244" y="213" width="3" height="3" fill="#e0e3eb"/><rect x="1252" y="209" width="1" height="21" fill="#000"/><rect x="1250" y="212" width="5" height="16" fill="#000"/><rect x="1258" y="225" width="1" height="5" fill="#000"/><rect x="1256" y="226" width="5" height="4" fill="#000"/><rect x="1265" y="226" width="1" height="11" fill="#000"/><rect x="1263" y="228" width="5" height="9" fill="#000"/><rect x="1272" y="234" width="1" height="27" fill="#000"/><rect x="1270" y="236" width="5" height="13" fill="#000"/><rect x="1278" y="245" width="1" height="9" fill="#000"/><rect x="1276" y="247" width="5" height="7" fill="#000"/><rect x="1285" y="246" width="1" height="12" fill="#000"/><rect x="1283" y="252" width="5" height="2" fill="#000"/><rect x="1291" y="251" width="1" height="19" fill="#000"/><rect x="1289" y="252" width="5" height="14" fill="#000"/><rect x="1298" y="256" width="1" height="12" fill="#000"/><rect x="1296" y="259" width="5" height="7" fill="#000"/><rect x="1297" y="260" width="3" height="5" fill="#e0e3eb"/><rect x="1304" y="259" width="1" height="5" fill="#000"/><rect x="1302" y="259" width="5" height="5" fill="#000"/><rect x="1311" y="255" width="1" height="13" fill="#000"/><rect x="1309" y="256" width="5" height="7" fill="#000"/><rect x="1310" y="257" width="3" height="5" fill="#e0e3eb"/><rect x="1318" y="256" width="1" height="10" fill="#000"/><rect x="1316" y="256" width="5" height="6" fill="#000"/><rect x="1324" y="259" width="1" height="9" fill="#000"/><rect x="1322" y="260" width="5" height="3" fill="#000"/><rect x="1331" y="248" width="1" height="16" fill="#000"/><rect x="1329" y="250" width="5" height="14" fill="#000"/><rect x="1330" y="251" width="3" height="12" fill="#e0e3eb"/><rect x="1337" y="240" width="1" height="11" fill="#000"/><rect x="1335" y="243" width="5" height="8" fill="#000"/><rect x="1336" y="244" width="3" height="6" fill="#e0e3eb"/><rect x="1344" y="237" width="1" height="12" fill="#000"/><rect x="1342" y="243" width="5" height="5" fill="#000"/><rect x="1351" y="246" width="1" height="10" fill="#000"/><rect x="1349" y="247" width="5" height="6" fill="#000"/><rect x="1357" y="241" width="1" height="16" fill="#000"/><rect x="1355" y="252" width="5" height="2" fill="#000"/><rect x="1364" y="239" width="1" height="17" fill="#000"/><rect x="1362" y="242" width="5" height="13" fill="#000"/><rect x="1363" y="243" width="3" height="11" fill="#e0e3eb"/><rect x="1370" y="240" width="1" height="17" fill="#000"/><rect x="1368" y="242" width="5" height="15" fill="#000"/><rect x="1377" y="249" width="1" height="11" fill="#000"/><rect x="1375" y="253" width="5" height="4" fill="#000"/><rect x="1376" y="254" width="3" height="2" fill="#e0e3eb"/><rect x="1384" y="251" width="1" height="16" fill="#000"/><rect x="1382" y="252" width="5" height="12" fill="#000"/><rect x="1390" y="257" width="1" height="169" fill="#000"/><rect x="1388" y="262" width="5" height="52" fill="#000"/><rect x="1397" y="291" width="1" height="25" fill="#000"/><rect x="1395" y="305" width="5" height="9" fill="#000"/><rect x="1396" y="306" width="3" height="7" fill="#e0e3eb"/><rect x="1403" y="274" width="1" height="37" fill="#000"/><rect x="1401" y="281" width="5" height="25" fill="#000"/><rect x="1402" y="282" width="3" height="23" fill="#e0e3eb"/><rect x="1410" y="272" width="1" height="15" fill="#000"/><rect x="1408" y="275" width="5" height="7" fill="#000"/><rect x="1409" y="276" width="3" height="5" fill="#e0e3eb"/><rect x="1417" y="275" width="1" height="25" fill="#000"/><rect x="1415" y="275" width="5" height="10" fill="#000"/><rect x="1423" y="278" width="1" height="19" fill="#000"/><rect x="1421" y="283" width="5" height="12" fill="#000"/><rect x="1430" y="289" width="1" height="17" fill="#000"/><rect x="1428" y="293" width="5" height="11" fill="#000"/><rect x="1436" y="301" width="1" height="18" fill="#000"/><rect x="1434" y="302" width="5" height="8" fill="#000"/><rect x="1443" y="304" width="1" height="5" fill="#000"/><rect x="1441" y="306" width="5" height="3" fill="#000"/><rect x="1442" y="307" width="3" height="1" fill="#e0e3eb"/><rect x="1449" y="297" width="1" height="13" fill="#000"/><rect x="1447" y="302" width="5" height="5" fill="#000"/><rect x="1448" y="303" width="3" height="3" fill="#e0e3eb"/><rect x="1456" y="290" width="1" height="15" fill="#000"/><rect x="1454" y="297" width="5" height="6" fill="#000"/><rect x="1455" y="298" width="3" height="4" fill="#e0e3eb"/><rect x="1463" y="288" width="1" height="17" fill="#000"/><rect x="1461" y="297" width="5" height="8" fill="#000"/><rect x="1469" y="302" width="1" height="12" fill="#000"/><rect x="1467" y="303" width="5" height="6" fill="#000"/><rect x="1476" y="301" width="1" height="9" fill="#000"/><rect x="1474" y="304" width="5" height="5" fill="#000"/><rect x="1475" y="305" width="3" height="3" fill="#e0e3eb"/><rect x="1482" y="295" width="1" height="10" fill="#000"/><rect x="1480" y="298" width="5" height="7" fill="#000"/><rect x="1481" y="299" width="3" height="5" fill="#e0e3eb"/><rect x="1489" y="298" width="1" height="7" fill="#000"/><rect x="1487" y="299" width="5" height="2" fill="#000"/><rect x="1496" y="291" width="1" height="12" fill="#000"/><rect x="1494" y="292" width="5" height="9" fill="#000"/><rect x="1495" y="293" width="3" height="7" fill="#e0e3eb"/><rect x="1502" y="289" width="1" height="11" fill="#000"/><rect x="1500" y="292" width="5" height="7" fill="#000"/><rect x="1509" y="293" width="1" height="12" fill="#000"/><rect x="1507" y="298" width="5" height="6" fill="#000"/><rect x="1515" y="294" width="1" height="11" fill="#000"/><rect x="1513" y="298" width="5" height="6" fill="#000"/><rect x="1514" y="299" width="3" height="4" fill="#e0e3eb"/></g>
<polyline points="15.5,521.8 18.9,522.2 25.5,522.0 32.1,521.9 38.7,521.4 45.3,521.2 51.9,521.1 58.5,521.0 65.1,520.7 71.7,520.0 78.3,519.0 84.8,518.1 91.4,517.1 98.0,516.9 104.6,516.9 111.2,516.9 117.8,517.3 124.4,517.0 131.0,517.5 137.6,517.3 144.2,517.0 150.8,516.7 157.4,517.4 164.0,518.1 170.5,519.5 177.1,519.3 183.7,519.4 190.3,518.2 196.9,516.6 203.5,515.4 210.1,513.9 216.7,513.3 223.3,512.6 229.9,512.1 236.5,511.7 243.1,510.8 249.7,509.5 256.2,508.3 262.8,506.1 269.4,505.4 276.0,503.8 282.6,502.9 289.2,501.9 295.8,501.2 302.4,500.4 309.0,499.9 315.6,499.4 322.2,499.0 328.8,498.5 335.3,499.0 341.9,499.4 348.5,499.8 355.1,501.0 361.7,502.1 368.3,502.3 374.9,502.4 381.5,501.7 388.1,501.2 394.7,501.1 401.3,500.3 407.9,499.7 414.4,499.7 421.0,500.1 427.6,500.2 434.2,499.5 440.8,499.4 447.4,499.1 454.0,498.4 460.6,498.7 467.2,500.2 473.8,502.5 480.4,503.7 487.0,505.0 493.6,506.2 500.1,507.2 506.7,508.1 513.3,509.4 519.9,510.3 526.5,511.5 533.1,512.1 539.7,513.0 546.3,514.5 552.9,517.1 559.5,518.1 566.1,518.7 572.7,519.5 579.2,519.5 585.8,519.3 592.4,519.3 599.0,519.5 605.6,519.1 612.2,519.0 618.8,519.0 625.4,519.1 632.0,519.9 638.6,519.7 645.2,519.1 651.8,519.4 658.4,520.7 664.9,522.0 671.5,522.6 678.1,523.1 684.7,523.5 691.3,523.5 697.9,523.1 704.5,522.4 711.1,521.4 717.7,520.7 724.3,519.8 730.9,518.7 737.5,517.4 744.0,516.1 750.6,514.2 757.2,512.0 763.8,511.4 770.4,510.9 777.0,509.6 783.6,507.2 790.2,505.3 796.8,503.8 803.4,502.4 810.0,500.4 816.6,497.9 823.2,495.9 829.7,493.3 836.3,491.0 842.9,488.6 849.5,486.3 856.1,483.5 862.7,480.6 869.3,480.1 875.9,480.6 882.5,480.6 889.1,480.3 895.7,480.3 902.3,481.5 908.8,483.4 915.4,485.6 922.0,488.8 928.6,491.7 935.2,495.0 941.8,497.7 948.4,500.4 955.0,503.8 961.6,505.1 968.2,505.3 974.8,505.7 981.4,505.8 988.0,506.5 994.5,506.6 1001.1,505.5 1007.7,504.1 1014.3,503.4 1020.9,502.4 1027.5,501.2 1034.1,500.6 1040.7,500.9 1047.3,501.5 1053.9,501.8 1060.5,503.2 1067.1,503.7 1073.7,504.6 1080.2,505.5 1086.8,506.6 1093.4,507.9 1100.0,509.6 1106.6,510.0 1113.2,510.8 1119.8,511.6 1126.4,512.6 1133.0,513.3 1139.6,512.4 1146.2,512.1 1152.8,511.9 1159.3,512.7 1165.9,513.5 1172.5,513.8 1179.1,513.0 1185.7,512.5 1192.3,510.9 1198.9,509.0 1205.5,506.5 1212.1,504.2 1218.7,502.5 1225.3,500.9 1231.9,500.5 1238.5,499.4 1245.0,497.7 1251.6,497.0 1258.2,496.3 1264.8,496.1 1271.4,496.8 1278.0,498.1 1284.6,500.2 1291.2,503.4 1297.8,506.4 1304.4,509.4 1311.0,511.2 1317.6,512.9 1324.1,514.5 1330.7,515.8 1337.3,516.9 1343.9,517.3 1350.5,517.9 1357.1,518.2 1363.7,517.2 1370.3,516.7 1376.9,516.1 1383.5,515.4 1390.1,516.8 1396.7,517.6 1403.2,517.6 1409.8,517.2 1416.4,517.0 1423.0,517.9 1429.6,519.5 1436.2,521.1 1442.8,522.2 1449.4,523.0 1456.0,524.2 1462.6,524.9 1469.2,526.0 1475.8,526.3 1482.4,524.6 1488.9,523.5 1495.5,523.0 1502.1,523.1 1508.7,523.1 1515.3,522.6" fill="none" stroke="#fdd835" stroke-width="1.8"/>
<polyline points="15.5,521.2 18.9,524.4 25.5,519.3 32.1,520.9 38.7,515.3 45.3,519.0 51.9,520.3 58.5,520.4 65.1,518.1 71.7,512.6 78.3,507.8 84.8,509.8 91.4,508.2 98.0,518.1 104.6,522.6 111.2,523.6 117.8,524.9 124.4,517.3 131.0,521.8 137.6,516.9 144.2,515.4 150.8,517.4 157.4,527.2 164.0,522.2 170.5,528.2 177.1,506.1 183.7,510.7 190.3,500.6 196.9,499.7 203.5,507.2 210.1,503.7 216.7,509.7 223.3,511.4 229.9,509.7 236.5,509.8 243.1,505.3 249.7,508.9 256.2,505.8 262.8,496.5 269.4,497.0 276.0,488.1 282.6,487.4 289.2,486.2 295.8,497.2 302.4,493.1 309.0,501.5 315.6,505.5 322.2,503.8 328.8,502.7 335.3,511.7 341.9,514.9 348.5,512.2 355.1,512.2 361.7,512.2 368.3,491.8 374.9,488.1 381.5,476.9 388.1,489.9 394.7,492.0 401.3,489.8 407.9,496.9 414.4,503.9 421.0,509.2 427.6,512.8 434.2,505.4 440.8,510.5 447.4,507.9 454.0,502.7 460.6,495.3 467.2,510.0 473.8,508.4 480.4,507.4 487.0,509.7 493.6,507.3 500.1,510.4 506.7,516.3 513.3,528.1 519.9,524.4 526.5,522.0 533.1,520.0 539.7,519.5 546.3,523.9 552.9,531.9 559.5,524.2 566.1,517.0 572.7,518.5 579.2,508.7 585.8,504.4 592.4,510.7 599.0,519.8 605.6,522.0 612.2,523.8 618.8,521.4 625.4,522.1 632.0,529.8 638.6,522.0 645.2,523.3 651.8,528.2 658.4,534.5 664.9,537.2 671.5,517.0 678.1,512.0 684.7,515.6 691.3,519.9 697.9,516.6 704.5,514.1 711.1,507.3 717.7,512.1 724.3,517.0 730.9,506.9 737.5,504.9 744.0,510.1 750.6,508.2 757.2,505.7 763.8,509.7 770.4,504.0 777.0,497.2 783.6,486.7 790.2,490.2 796.8,492.6 803.4,487.5 810.0,484.5 816.6,481.8 823.2,478.8 829.7,469.7 836.3,477.8 842.9,474.9 849.5,473.1 856.1,470.0 862.7,463.5 869.3,490.5 875.9,492.9 882.5,490.3 889.1,489.4 895.7,486.7 902.3,502.1 908.8,507.4 915.4,509.9 922.0,514.3 928.6,518.8 935.2,521.1 941.8,511.5 948.4,506.6 955.0,512.0 961.6,507.7 968.2,496.8 974.8,494.9 981.4,491.9 988.0,495.8 994.5,504.0 1001.1,491.8 1007.7,490.0 1014.3,504.3 1020.9,506.0 1027.5,504.0 1034.1,502.8 1040.7,511.3 1047.3,519.3 1053.9,512.4 1060.5,516.9 1067.1,501.7 1073.7,503.8 1080.2,508.2 1086.8,519.6 1093.4,511.1 1100.0,513.5 1106.6,510.1 1113.2,516.0 1119.8,515.6 1126.4,517.6 1133.0,519.9 1139.6,507.0 1146.2,508.4 1152.8,513.6 1159.3,513.3 1165.9,514.9 1172.5,512.9 1179.1,507.6 1185.7,504.0 1192.3,491.6 1198.9,483.6 1205.5,481.3 1212.1,483.4 1218.7,493.6 1225.3,497.4 1231.9,500.7 1238.5,492.8 1245.0,490.8 1251.6,503.4 1258.2,504.5 1264.8,509.8 1271.4,518.1 1278.0,521.7 1284.6,521.4 1291.2,528.8 1297.8,522.9 1304.4,525.1 1311.0,518.9 1317.6,522.0 1324.1,522.9 1330.7,510.9 1337.3,505.7 1343.9,509.0 1350.5,513.3 1357.1,514.1 1363.7,504.0 1370.3,515.4 1376.9,512.0 1383.5,519.4 1390.1,542.1 1396.7,536.2 1403.2,519.3 1409.8,516.2 1416.4,520.0 1423.0,524.4 1429.6,528.3 1436.2,530.6 1442.8,528.7 1449.4,525.3 1456.0,521.3 1462.6,525.0 1469.2,527.2 1475.8,523.9 1482.4,518.7 1488.9,519.8 1495.5,513.3 1502.1,517.0 1508.7,520.6 1515.3,516.2" fill="none" stroke="#7e57c2" stroke-width="1.5"/>
<polyline points="15.5,619.0 18.9,621.0 25.5,619.6 32.1,618.7 38.7,615.2 45.3,613.7 51.9,610.0 58.5,607.7 65.1,599.8 71.7,588.6 78.3,578.4 84.8,578.7 91.4,581.3 98.0,597.3 104.6,611.1 111.2,628.1 117.8,629.9 124.4,624.0 131.0,621.2 137.6,616.9 144.2,616.8 150.8,614.0 157.4,619.5 164.0,620.0 170.5,623.2 177.1,608.1 183.7,601.4 190.3,582.8 196.9,576.9 203.5,573.9 210.1,575.9 216.7,583.0 223.3,586.0 229.9,590.5 236.5,590.7 243.1,586.9 249.7,586.3 256.2,584.4 262.8,578.7 269.4,576.4 276.0,575.4 282.6,580.2 289.2,578.9 295.8,583.0 302.4,584.9 309.0,591.9 315.6,596.5 322.2,603.6 328.8,605.4 335.3,609.5 341.9,617.4 348.5,625.0 355.1,626.2 361.7,624.2 368.3,610.6 374.9,596.4 381.5,576.1 388.1,574.4 394.7,575.4 401.3,580.9 407.9,585.1 414.4,591.4 421.0,601.9 427.6,609.6 434.2,610.5 440.8,611.3 447.4,610.0 454.0,610.9 460.6,605.3 467.2,608.7 473.8,612.5 480.4,619.6 487.0,619.4 493.6,618.8 500.1,618.2 506.7,621.3 513.3,627.1 519.9,629.5 526.5,625.7 533.1,619.8 539.7,617.7 546.3,619.1 552.9,624.2 559.5,625.4 566.1,620.4 572.7,613.6 579.2,605.2 585.8,597.2 592.4,591.9 599.0,597.4 605.6,608.0 612.2,616.6 618.8,618.6 625.4,619.4 632.0,622.4 638.6,622.0 645.2,622.0 651.8,621.9 658.4,626.9 664.9,628.5 671.5,619.4 678.1,607.9 684.7,598.1 691.3,596.8 697.9,595.9 704.5,594.2 711.1,587.5 717.7,581.2 724.3,580.0 730.9,576.9 737.5,574.3 744.0,571.4 750.6,572.8 757.2,574.0 763.8,578.8 770.4,578.1 777.0,576.1 783.6,566.9 790.2,570.5 796.8,577.7 803.4,581.2 810.0,578.6 816.6,573.0 823.2,571.4 829.7,569.4 836.3,573.6 842.9,575.5 849.5,576.7 856.1,573.8 862.7,570.6 869.3,577.1 875.9,585.3 882.5,594.0 889.1,594.2 895.7,591.3 902.3,596.4 908.8,607.5 915.4,619.5 922.0,627.5 928.6,629.4 935.2,631.3 941.8,627.0 948.4,620.8 955.0,617.0 961.6,612.8 968.2,603.6 974.8,591.1 981.4,580.5 988.0,578.9 994.5,581.4 1001.1,577.7 1007.7,572.8 1014.3,574.2 1020.9,584.9 1027.5,594.4 1034.1,596.0 1040.7,602.4 1047.3,615.4 1053.9,623.1 1060.5,628.6 1067.1,616.0 1073.7,609.1 1080.2,601.7 1086.8,614.0 1093.4,619.1 1100.0,623.0 1106.6,613.9 1113.2,616.8 1119.8,617.5 1126.4,625.3 1133.0,627.0 1139.6,618.4 1146.2,609.3 1152.8,604.7 1159.3,610.5 1165.9,616.5 1172.5,614.0 1179.1,606.4 1185.7,593.9 1192.3,583.3 1198.9,573.5 1205.5,570.0 1212.1,569.1 1218.7,576.4 1225.3,583.3 1231.9,591.8 1238.5,591.5 1245.0,587.6 1251.6,587.4 1258.2,592.8 1264.8,602.7 1271.4,610.5 1278.0,620.0 1284.6,626.3 1291.2,630.0 1297.8,629.0 1304.4,629.3 1311.0,625.3 1317.6,625.6 1324.1,625.3 1330.7,622.5 1337.3,615.1 1343.9,605.4 1350.5,603.7 1357.1,603.4 1363.7,595.0 1370.3,595.0 1376.9,593.3 1383.5,610.2 1390.1,604.8 1396.7,601.5 1403.2,586.2 1409.8,581.2 1416.4,578.3 1423.0,580.1 1429.6,583.7 1436.2,586.9 1442.8,588.4 1449.4,588.1 1456.0,586.3 1462.6,585.0 1469.2,584.8 1475.8,584.2 1482.4,590.7 1488.9,597.7 1495.5,601.6 1502.1,600.6 1508.7,601.0 1515.3,598.6" fill="none" stroke="#ff6d00" stroke-width="1.5"/>
<polyline points="15.5,616.7 18.9,622.0 25.5,615.5 32.1,618.6 38.7,611.6 45.3,610.8 51.9,607.7 58.5,604.6 65.1,587.1 71.7,574.1 78.3,574.1 84.8,587.8 91.4,581.9 98.0,622.1 104.6,629.2 111.2,633.0 117.8,627.4 124.4,611.7 131.0,624.6 137.6,614.4 144.2,611.4 150.8,616.3 157.4,630.9 164.0,612.8 170.5,625.9 177.1,585.5 183.7,592.8 190.3,570.0 196.9,567.8 203.5,584.0 210.1,575.9 216.7,589.1 223.3,593.0 229.9,589.5 236.5,589.7 243.1,581.4 249.7,588.0 256.2,583.8 262.8,564.5 269.4,580.8 276.0,580.8 282.6,578.9 289.2,577.0 295.8,593.2 302.4,584.4 309.0,597.9 315.6,607.3 322.2,605.5 328.8,603.4 335.3,619.7 341.9,629.3 348.5,626.1 355.1,623.2 361.7,623.2 368.3,585.4 374.9,580.6 381.5,562.2 388.1,580.5 394.7,583.5 401.3,578.8 407.9,592.9 414.4,602.5 421.0,610.4 427.6,615.9 434.2,605.2 440.8,612.8 447.4,612.0 454.0,607.9 460.6,596.0 467.2,622.2 473.8,619.3 480.4,617.5 487.0,621.5 493.6,617.5 500.1,615.6 506.7,631.0 513.3,634.6 519.9,622.8 526.5,619.6 533.1,617.1 539.7,616.4 546.3,623.9 552.9,632.3 559.5,620.0 566.1,608.8 572.7,611.9 579.2,595.0 585.8,584.8 592.4,596.0 599.0,611.4 605.6,616.7 612.2,621.8 618.8,617.4 625.4,619.1 632.0,630.8 638.6,616.2 645.2,619.0 651.8,630.5 658.4,631.1 664.9,624.1 671.5,602.9 678.1,596.6 684.7,594.9 691.3,599.0 697.9,593.8 704.5,589.8 711.1,578.9 717.7,574.9 724.3,586.3 730.9,569.5 737.5,567.2 744.0,577.4 750.6,573.8 757.2,570.8 763.8,591.9 770.4,571.7 777.0,564.6 783.6,564.3 790.2,582.7 796.8,586.0 803.4,575.0 810.0,574.9 816.6,569.1 823.2,570.3 829.7,568.8 836.3,581.6 842.9,576.0 849.5,572.5 856.1,573.0 862.7,566.4 869.3,591.9 875.9,597.4 882.5,592.6 889.1,592.8 895.7,588.5 902.3,608.0 908.8,625.9 915.4,624.6 922.0,632.0 928.6,631.7 935.2,630.2 941.8,619.2 948.4,613.0 955.0,618.8 961.6,606.7 968.2,585.4 974.8,581.3 981.4,574.7 988.0,580.6 994.5,588.8 1001.1,563.8 1007.7,565.9 1014.3,593.0 1020.9,595.8 1027.5,594.4 1034.1,597.9 1040.7,614.8 1047.3,633.4 1053.9,621.0 1060.5,631.5 1067.1,595.6 1073.7,600.1 1080.2,609.5 1086.8,632.5 1093.4,615.4 1100.0,621.0 1106.6,605.2 1113.2,624.2 1119.8,623.1 1126.4,628.6 1133.0,629.3 1139.6,597.3 1146.2,601.1 1152.8,615.6 1159.3,614.9 1165.9,619.0 1172.5,608.0 1179.1,592.2 1185.7,581.6 1192.3,576.0 1198.9,563.0 1205.5,570.9 1212.1,573.2 1218.7,585.1 1225.3,591.5 1231.9,599.0 1238.5,583.9 1245.0,579.9 1251.6,598.3 1258.2,600.2 1264.8,609.6 1271.4,621.8 1278.0,628.7 1284.6,628.3 1291.2,632.9 1297.8,625.9 1304.4,629.0 1311.0,621.1 1317.6,626.6 1324.1,628.3 1330.7,612.7 1337.3,604.3 1343.9,599.2 1350.5,607.6 1357.1,603.3 1363.7,574.0 1370.3,607.6 1376.9,598.4 1383.5,624.6 1390.1,591.4 1396.7,588.5 1403.2,578.6 1409.8,576.5 1416.4,579.8 1423.0,583.8 1429.6,587.6 1436.2,589.4 1442.8,588.3 1449.4,586.5 1456.0,584.0 1462.6,584.4 1469.2,585.9 1475.8,582.3 1482.4,603.9 1488.9,606.8 1495.5,594.1 1502.1,600.9 1508.7,608.0 1515.3,586.8" fill="none" stroke="#2962ff" stroke-width="1.5"/>
</g>
<rect x="1685.5" y="47.5" width="84" height="37" rx="6" fill="none" stroke="#e6e8ee" stroke-width="1"/>
<g clip-path="url(#cp2)">
<path d="M1680,158 H1752.0 Q1754.5,158 1754.5,160.5 V182.1 Q1754.5,184.6 1752.0,184.6 H1680 Z" fill="#2a2a2a"/><path d="M1680,184.6 H1754.5 Q1754.5,184.6 1754.5,184.6 V209.9 Q1754.5,209.9 1754.5,209.9 H1680 Z" fill="#0000ff"/><path d="M1680,209.9 H1754.5 Q1754.5,209.9 1754.5,209.9 V235.2 Q1754.5,235.2 1754.5,235.2 H1680 Z" fill="#00ffff"/><path d="M1680,235.2 H1754.5 Q1754.5,235.2 1754.5,235.2 V260.5 Q1754.5,260.5 1754.5,260.5 H1680 Z" fill="#ff7800"/><path d="M1680,260.5 H1752.0 Q1754.5,260.5 1754.5,263.0 V283.3 Q1754.5,285.8 1752.0,285.8 H1680 Z" fill="#2a2a2a"/><path d="M1680,333 H1752.0 Q1754.5,333 1754.5,335.5 V356.2 Q1754.5,358.7 1752.0,358.7 H1680 Z" fill="#2a2a2a"/><path d="M1680,285.5 H1766 Q1770,285.5 1770,289.5 V328.7 Q1770,332.7 1766,332.7 H1680 Z" fill="#d1d4dc"/><path d="M1680,503.2 H1742.5 Q1745,503.2 1745,505.7 V525.5 Q1745,528 1742.5,528 H1680 Z" fill="#7e57c2"/><path d="M1680,528 H1745 Q1745,528 1745,528 V551.5 Q1745,551.5 1745,551.5 H1680 Z" fill="#fdd835"/><path d="M1680,572 H1742.5 Q1745,572 1745,574.5 V595.4 Q1745,597.9 1742.5,597.9 H1680 Z" fill="#2962ff"/><path d="M1680,597.9 H1742.5 Q1745,597.9 1745,600.4 V622.1 Q1745,624.6 1742.5,624.6 H1680 Z" fill="#ff6d00"/>
<text x="1692.8" y="641.6" font-size="17.5" fill="#131722" textLength="35.2" lengthAdjust="spacingAndGlyphs">0.00</text>
</g>
<line x1="1680" x2="1777" y1="551.5" y2="551.5" stroke="#e0e3eb" stroke-width="1"/><line x1="1680" x2="1777" y1="451.5" y2="451.5" stroke="#e0e3eb" stroke-width="1"/><line x1="15" x2="1777" y1="641.5" y2="641.5" stroke="#e0e3eb" stroke-width="1"/>
<text x="15.1" y="28.8" font-size="17.5" fill="#131722" font-weight="normal" textLength="590.7" lengthAdjust="spacingAndGlyphs">CryptoFXStreet created with TradingView.com, Oct 29, 2025 16:24 UTC-4</text><text x="26.7" y="69.6" font-size="17.5" fill="#131722" font-weight="normal" textLength="232.6" lengthAdjust="spacingAndGlyphs">ONDOUSDT SPOT · 1D · Bybit</text><text x="269.9" y="69.6" font-size="17.5" fill="#131722" font-weight="normal" textLength="64.7" lengthAdjust="spacingAndGlyphs">O0.7291</text><text x="347.1" y="69.6" font-size="17.5" fill="#131722" font-weight="normal" textLength="64.9" lengthAdjust="spacingAndGlyphs">H0.7592</text><text x="423.2" y="69.6" font-size="17.5" fill="#131722" font-weight="normal" textLength="64.7" lengthAdjust="spacingAndGlyphs">L0.7164</text><text x="497.4" y="69.6" font-size="17.5" fill="#131722" font-weight="normal" textLength="63.2" lengthAdjust="spacingAndGlyphs">C0.7436</text><text x="571.7" y="69.6" font-size="17.5" fill="#131722" font-weight="normal" textLength="137.7" lengthAdjust="spacingAndGlyphs">+0.0145 (+1.99%)</text><text x="26.7" y="95.6" font-size="17.5" fill="#131722" font-weight="normal" textLength="161.9" lengthAdjust="spacingAndGlyphs">EMA 20/50/100/200</text><text x="1699.0" y="72.0" font-size="17.5" fill="#131722" font-weight="normal" textLength="41.7" lengthAdjust="spacingAndGlyphs">USDT</text><text x="1693.4" y="135.8" font-size="17.5" fill="#131722" font-weight="normal" textLength="53.6" lengthAdjust="spacingAndGlyphs">1.4000</text><text x="1693.4" y="392.6" font-size="17.5" fill="#131722" font-weight="normal" textLength="53.6" lengthAdjust="spacingAndGlyphs">0.4000</text><text x="1693.4" y="444.6" font-size="17.5" fill="#131722" font-weight="normal" textLength="53.6" lengthAdjust="spacingAndGlyphs">0.2000</text><text x="1692.8" y="467.1" font-size="17.5" fill="#131722" font-weight="normal" textLength="44.7" lengthAdjust="spacingAndGlyphs">80.00</text><text x="1692.8" y="566.8" font-size="17.5" fill="#131722" font-weight="normal" textLength="54.2" lengthAdjust="spacingAndGlyphs">100.00</text><text x="1692.4" y="177.8" font-size="17.5" fill="#fff" font-weight="bold" textLength="54.7" lengthAdjust="spacingAndGlyphs">0.9906</text><text x="1692.4" y="203.1" font-size="17.5" fill="#fff" font-weight="bold" textLength="54.7" lengthAdjust="spacingAndGlyphs">0.9124</text><text x="1692.4" y="228.4" font-size="17.5" fill="#000" font-weight="bold" textLength="54.7" lengthAdjust="spacingAndGlyphs">0.8777</text><text x="1692.4" y="253.7" font-size="17.5" fill="#fff" font-weight="bold" textLength="54.7" lengthAdjust="spacingAndGlyphs">0.8338</text><text x="1692.4" y="279.0" font-size="17.5" fill="#fff" font-weight="bold" textLength="54.7" lengthAdjust="spacingAndGlyphs">0.8284</text><text x="1692.4" y="351.8" font-size="17.5" fill="#fff" font-weight="bold" textLength="54.7" lengthAdjust="spacingAndGlyphs">0.7224</text><text x="1692.4" y="304.7" font-size="17.5" fill="#131722" font-weight="normal" textLength="54.2" lengthAdjust="spacingAndGlyphs">0.7436</text><text x="1692.8" y="325.6" font-size="17.5" fill="#434651" font-weight="normal" textLength="69.8" lengthAdjust="spacingAndGlyphs">03:35:28</text><text x="1692.8" y="522.8" font-size="17.5" fill="#fff" font-weight="bold" textLength="45.3" lengthAdjust="spacingAndGlyphs">44.10</text><text x="1692.8" y="547.8" font-size="17.5" fill="#000" font-weight="bold" textLength="45.3" lengthAdjust="spacingAndGlyphs">40.14</text><text x="1692.8" y="591.4" font-size="17.5" fill="#fff" font-weight="bold" textLength="45.3" lengthAdjust="spacingAndGlyphs">67.15</text><text x="1692.8" y="617.8" font-size="17.5" fill="#fff" font-weight="bold" textLength="45.3" lengthAdjust="spacingAndGlyphs">51.80</text><text x="27.1" y="481.2" font-size="17.5" fill="#131722" font-weight="normal" textLength="23.3" lengthAdjust="spacingAndGlyphs">RSI</text><text x="26.7" y="580.8" font-size="17.5" fill="#131722" font-weight="normal" textLength="44.1" lengthAdjust="spacingAndGlyphs">Stoch</text><text x="124.3" y="669.0" font-size="17.5" fill="#131722" stroke="#131722" stroke-width="0.4" font-weight="normal" text-anchor="middle">Apr</text><text x="322.2" y="669.0" font-size="17.5" fill="#131722" stroke="#131722" stroke-width="0.4" font-weight="normal" text-anchor="middle">May</text><text x="526.6" y="669.0" font-size="17.5" fill="#131722" stroke="#131722" stroke-width="0.4" font-weight="normal" text-anchor="middle">Jun</text><text x="724.0" y="669.0" font-size="17.5" fill="#131722" stroke="#131722" stroke-width="0.4" font-weight="normal" text-anchor="middle">Jul</text><text x="929.2" y="669.0" font-size="17.5" fill="#131722" stroke="#131722" stroke-width="0.4" font-weight="normal" text-anchor="middle">Aug</text><text x="1132.6" y="669.0" font-size="17.5" fill="#131722" stroke="#131722" stroke-width="0.4" font-weight="normal" text-anchor="middle">Sep</text><text x="1331.2" y="669.0" font-size="17.5" fill="#131722" stroke="#131722" stroke-width="0.4" font-weight="normal" text-anchor="middle">Oct</text><text x="1535.5" y="669.0" font-size="17.5" fill="#131722" stroke="#131722" stroke-width="0.4" font-weight="normal" text-anchor="middle">Nov</text><text x="72.9" y="738.4" font-size="30.5" fill="#131722" font-weight="bold" textLength="182.5" lengthAdjust="spacingAndGlyphs">TradingView</text>
<path d="M18,716.2 H36.1 V738.4 H27.1 V725.4 H18 Z" fill="#131722"/><circle cx="44.1" cy="720.6" r="4.6" fill="#131722"/><path d="M52.8,716.2 H62.5 L53.5,738.4 H43.6 Z" fill="#131722"/>
</svg>
</body></html>
